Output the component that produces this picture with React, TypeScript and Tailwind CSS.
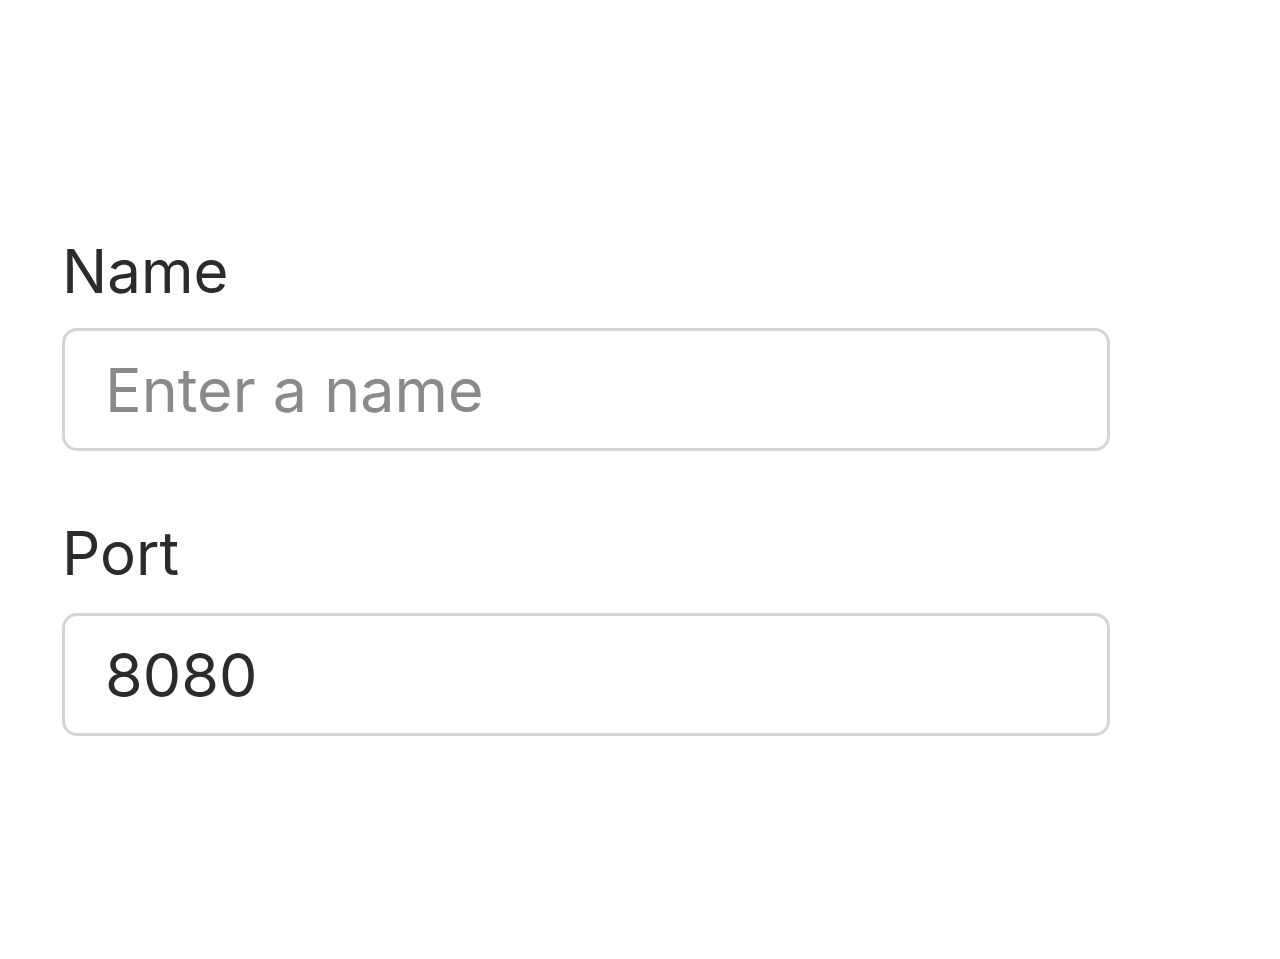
import { useState } from 'react';

function Field({
  label,
  placeholder,
  value,
  onChange,
  className = '',
  labelClass = 'mb-[27px]',
}: {
  label: string;
  placeholder?: string;
  value: string;
  onChange: (v: string) => void;
  className?: string;
  labelClass?: string;
}) {
  return (
    <label className={`flex flex-col ${className}`}>
      <span className={`text-[60px] leading-none text-[#2b2b2b] ${labelClass}`}>{label}</span>
      <input
        type="text"
        value={value}
        placeholder={placeholder}
        onChange={(e) => onChange(e.target.value)}
        className="h-[123px] w-full rounded-[15px] border-[3px] border-[#d4d4d4] bg-white pl-[40px] pr-[38px] text-[61px] text-[#2b2b2b] placeholder:text-[#8a8a8a] outline-none"
      />
    </label>
  );
}

export default function App() {
  const [name, setName] = useState('');
  const [port, setPort] = useState('8080');

  return (
    <div
      className="min-h-screen bg-white pl-[62px] pt-[241px]"
      style={{ fontFamily: 'Inter, "Noto Sans", sans-serif' }}
    >
      <div className="w-[1048px] flex flex-col">
        <Field label="Name" placeholder="Enter a name" value={name} onChange={setName} />
        <Field
          label="Port"
          value={port}
          onChange={setPort}
          className="mt-[72px]"
          labelClass="mb-[30px]"
        />
      </div>
    </div>
  );
}
